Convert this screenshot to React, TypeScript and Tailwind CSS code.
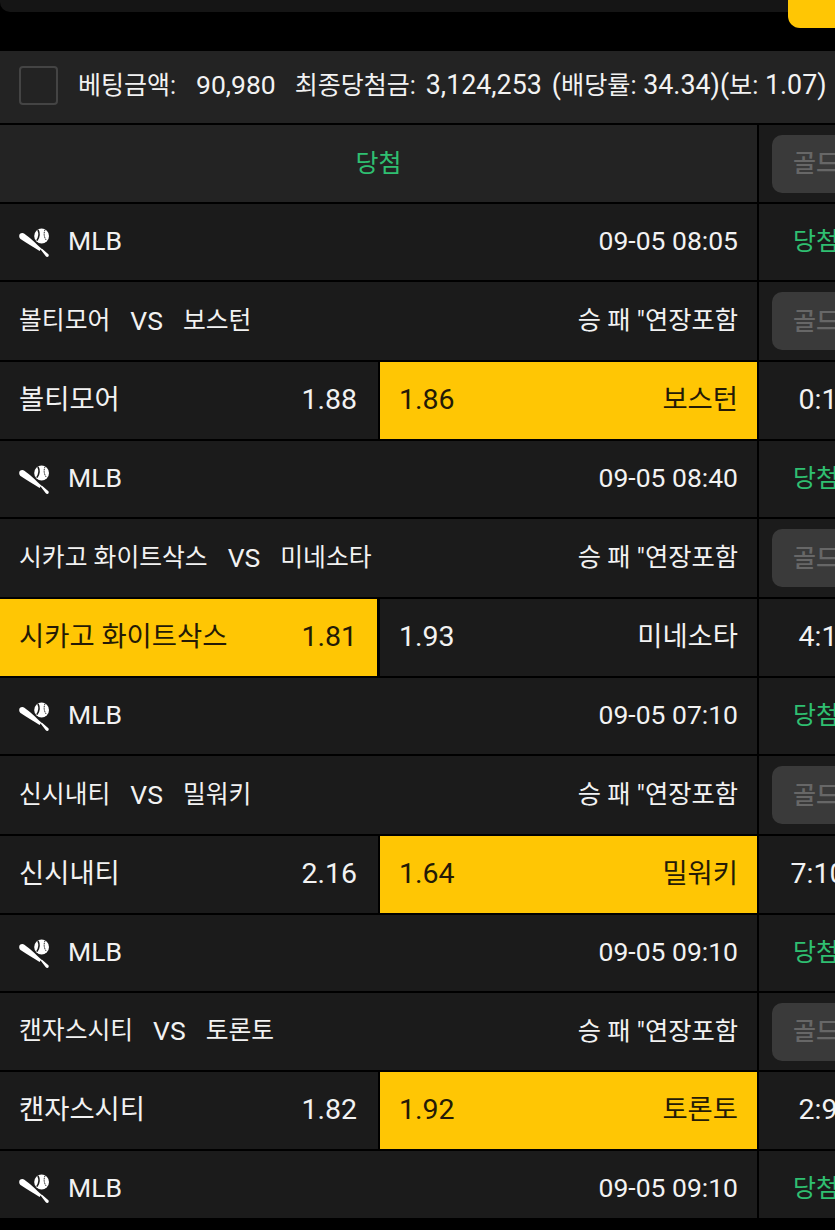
function BatBall() {
  return (
    <svg width="32" height="32" viewBox="0 0 32 32" className="shrink-0">
      <path d="M1.2 10.2 C1 7.4 4.2 6.2 6.4 7.7 C11.2 11 18.2 17.6 23.4 22.6 L21.6 25 C15.6 20.8 8 16.8 2.9 13.2 C1.9 12.5 1.3 11.4 1.2 10.2 Z" fill="#fff" />
      <path d="M22.6 23.6 L23.8 22.6 L30.4 28.2 C31.2 29.2 30.6 31 29.2 31 C28.6 31 28.2 30.6 27.8 30.2 Z" fill="#fff" />
      <circle cx="23.6" cy="10" r="7.4" fill="#fff" />
      <path d="M20 3.8 C21.6 7 21.4 11 18.8 14.6" fill="none" stroke="#1b1b1b" strokeWidth="1.6" />
      <path d="M27 3.6 C25.6 7.4 25.8 11 28.4 14.4" fill="none" stroke="#1b1b1b" strokeWidth="0.9" strokeDasharray="1.6 0.7" />
    </svg>
  );
}

function RightCell({ children }: { children: React.ReactNode }) {
  return <div className="w-[112px] shrink-0 ml-[2px] flex items-center justify-center bg-[#1b1b1b]">{children}</div>;
}

function GoldBtn() {
  return (
    <div className="w-[86px] h-[58px] rounded-[10px] bg-[#3a3a3a] text-[#676767] text-[25px] font-medium flex items-center justify-center pl-[2px]">골드</div>
  );
}

type Game = {
  time: string;
  home: string;
  away: string;
  h: string;
  a: string;
  score: string;
  pick: 'home' | 'away';
  teamH: string;
};

function MlbRow({ time, last }: { time: string; last?: boolean }) {
  return (
    <div className={last ? 'flex h-[67px]' : 'flex h-[76px]'}>
      <div className={`w-[757px] shrink-0 bg-[#1b1b1b] flex items-center justify-between pl-[18px] pr-[19px] text-[26.5px] ${last ? 'pt-[7px]' : 'pb-[1px]'}`}>
        <div className="flex items-center gap-[18px]"><BatBall /><span>MLB</span></div>
        <span>{time}</span>
      </div>
      <div className={`w-[112px] shrink-0 ml-[2px] flex items-center justify-center bg-[#1b1b1b] pl-[2px] ${last ? 'pt-[7px]' : 'pb-[1px]'}`}>
        <span className="text-[#2fbf71]">당첨</span>
      </div>
    </div>
  );
}

function Game({ g }: { g: Game }) {
  const homePick = g.pick === 'home';
  return (
    <div className="flex flex-col">
      <MlbRow time={g.time} />
      <div className={`flex mt-[2px] ${g.teamH}`}>
        <div className="w-[757px] shrink-0 bg-[#1b1b1b] flex items-center justify-between px-[19px]">
          <div className="flex items-center">
            <span className="text-[24.8px]">{g.home}</span>
            <span className="mx-[20px] text-[26.5px]">VS</span>
            <span className="text-[24.8px]">{g.away}</span>
          </div>
          <span className="text-[25.3px]">승 패 "연장포함</span>
        </div>
        <RightCell><GoldBtn /></RightCell>
      </div>
      <div className="flex mt-[2px] mb-[2px] h-[77px] text-[28.5px]">
        <div className="w-[757px] shrink-0 flex">
          <div className={`${homePick ? 'w-[377px] bg-[#ffc604] text-[#241a06] pr-[20px]' : 'w-[378px] bg-[#1b1b1b] pr-[21px]'} flex items-center justify-between pl-[19px]`}>
            <span className="text-[27.4px]">{g.home}</span>
            <span>{g.h}</span>
          </div>
          <div className={`${homePick ? 'bg-[#1b1b1b] ml-[3px]' : 'bg-[#ffc604] text-[#241a06] ml-[2px]'} flex-1 flex items-center justify-between px-[19px]`}>
            <span>{g.a}</span>
            <span className="text-[27.4px]">{g.away}</span>
          </div>
        </div>
        <RightCell><span className="pl-[6px]">{g.score}</span></RightCell>
      </div>
    </div>
  );
}

const games: Game[] = [
  { time: '09-05 08:05', home: '볼티모어', away: '보스턴', h: '1.88', a: '1.86', score: '0:1', pick: 'away', teamH: 'h-[78px]' },
  { time: '09-05 08:40', home: '시카고 화이트삭스', away: '미네소타', h: '1.81', a: '1.93', score: '4:1', pick: 'home', teamH: 'h-[78px]' },
  { time: '09-05 07:10', home: '신시내티', away: '밀워키', h: '2.16', a: '1.64', score: '7:10', pick: 'away', teamH: 'h-[78px]' },
  { time: '09-05 09:10', home: '캔자스시티', away: '토론토', h: '1.82', a: '1.92', score: '2:9', pick: 'away', teamH: 'h-[77px]' },
];

export default function App() {
  return (
    <div className="w-[835px] h-[1230px] overflow-hidden bg-black text-[#f2f2f2] text-[25px] leading-none" style={{ fontFamily: 'Roboto, "Noto Sans CJK KR", sans-serif' }}>
      <div className="flex items-start h-[51px]">
        <div className="flex-1 h-[12px] bg-[#151515] rounded-bl-[10px]" />
        <div className="w-[47px] h-[28px] bg-[#ffc604] rounded-bl-[12px]" />
      </div>
      <div className="h-[72px] bg-[#232323] flex items-center pl-[19px] pb-[4px] whitespace-nowrap">
        <div className="w-[39px] h-[39px] rounded-[4px] border-2 border-[#444] mr-[20px]" />
        <span>베팅금액:</span>
        <span className="ml-[20px] text-[26.5px]">90,980</span>
        <span className="ml-[19px]">최종당첨금:</span>
        <span className="ml-[10px] text-[26.8px]">3,124,253</span>
        <span className="ml-[10px] text-[26.8px]"><span>(</span><span className="text-[25.2px]">배당률:</span> 34.34)(<span className="text-[25.2px]">보:</span> 1.07)</span>
      </div>
      <div className="flex h-[77px] mt-[2px] mb-[2px]">
        <div className="w-[757px] shrink-0 bg-[#232323] flex items-center justify-center text-[#2fbf71]">당첨</div>
        <RightCell><GoldBtn /></RightCell>
      </div>
      {games.map((g) => <Game key={g.time + g.home} g={g} />)}
      <MlbRow time="09-05 09:10" last />
    </div>
  );
}
